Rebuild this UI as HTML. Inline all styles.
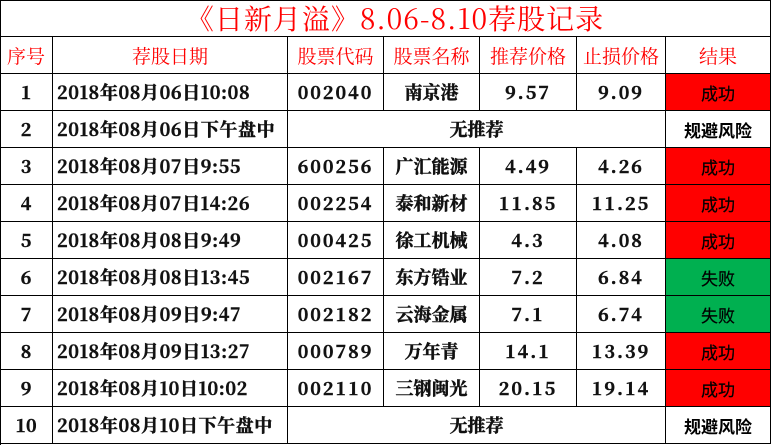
<!DOCTYPE html>
<html><head><meta charset="utf-8"><style>
*{margin:0;padding:0;box-sizing:border-box}
body{width:771px;height:445px;background:#fff;position:relative;overflow:hidden;font-family:"Noto Serif CJK SC",serif}
.c{position:absolute;border-right:1px solid #000;border-bottom:1px solid #000;display:flex;align-items:center;justify-content:center;font-size:18px;font-weight:bold;color:#111;white-space:nowrap;-webkit-text-stroke:0.5px #111}
.h{color:#f00;font-weight:normal;font-size:19px;-webkit-text-stroke:0}
.l{justify-content:flex-start;padding-left:4px;letter-spacing:0.6px}
.r{background:#f00;font-family:"Noto Sans CJK SC",sans-serif;font-weight:normal;font-size:17px;color:#000;-webkit-text-stroke:0.2px #000}
.g{background:#00b050;font-family:"Noto Sans CJK SC",sans-serif;font-weight:normal;font-size:17px;color:#000;-webkit-text-stroke:0.2px #000}
.w{font-family:"Noto Sans CJK SC",sans-serif;font-size:17px;color:#000;-webkit-text-stroke:0}
.n{letter-spacing:2px}
</style></head><body>
<div style="position:absolute;left:0;top:0;width:771px;height:445px;border-left:1px solid #000;border-top:1px solid #000"></div>
<div class="c" style="left:0;top:0;width:771px;height:37px;color:#f00;font-weight:normal;font-size:28px;padding-left:20px;letter-spacing:1px;-webkit-text-stroke:0">《日新月溢》8.06-8.10荐股记录</div>
<div id="t"></div>
<script>
var X=[0,53,288,384,480,577,666,771];
var rows=[
["序号","荐股日期","股票代码","股票名称","推荐价格","止损价格","结果","h"],
["1","2018年08月06日10:08","002040","南京港","9.57","9.09","成功","r"],
["2","2018年08月06日下午盘中",null,"无推荐",null,null,"规避风险","w"],
["3","2018年08月07日9:55","600256","广汇能源","4.49","4.26","成功","r"],
["4","2018年08月07日14:26","002254","泰和新材","11.85","11.25","成功","r"],
["5","2018年08月08日9:49","000425","徐工机械","4.3","4.08","成功","r"],
["6","2018年08月08日13:45","002167","东方锆业","7.2","6.84","失败","g"],
["7","2018年08月09日9:47","002182","云海金属","7.1","6.74","失败","g"],
["8","2018年08月09日13:27","000789","万年青","14.1","13.39","成功","r"],
["9","2018年08月10日10:02","002110","三钢闽光","20.15","19.14","成功","r"],
["10","2018年08月10日下午盘中",null,"无推荐",null,null,"规避风险","w"]];
var h="";
rows.forEach(function(r,i){
 var y=37+i*37,hh=37;
 var hd=r[7]=="h";
 function cell(a,b,txt,cls){h+='<div class="c '+cls+'" style="left:'+X[a]+'px;top:'+y+'px;width:'+(X[b]-X[a])+'px;height:'+hh+'px">'+txt+'</div>';}
 cell(0,1,r[0],hd?"h":"");
 cell(1,2,r[1],hd?"h":"l");
 if(r[2]===null){cell(2,6,r[3],"");}
 else{cell(2,3,r[2],hd?"h":"n");cell(3,4,r[3],hd?"h":"");cell(4,5,r[4],hd?"h":"n");cell(5,6,r[5],hd?"h":"n");}
 cell(6,7,r[6],r[7]);
});
document.getElementById("t").innerHTML=h;
</script>
</body></html>
